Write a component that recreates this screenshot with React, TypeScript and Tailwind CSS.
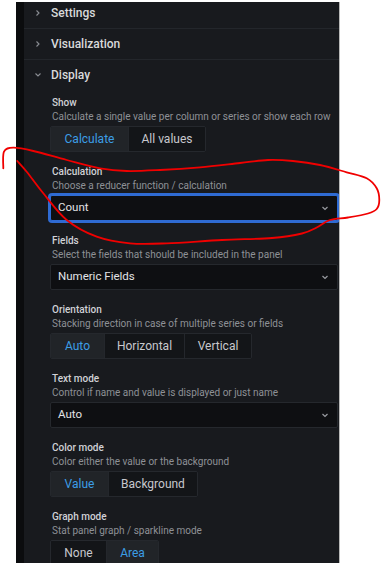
import React from "react";

type Btn = { label: string; w: number; active?: boolean };

const FONT = { fontFamily: "Roboto, 'Noto Sans', sans-serif" };

// freehand red loop, image coordinates
const LOOP: number[][] = [
  [3.3, 168.3], [4, 151.7], [13.3, 147.7], [33.3, 151], [66.7, 160], [100, 168.3],
  [126.7, 171], [160, 170], [200, 167.3], [240, 163], [268, 160], [293, 161],
  [320, 165], [346.7, 172.3], [366.7, 178.3], [376.7, 188.3], [379.3, 200],
  [376.7, 209], [368, 213.5], [348, 217.5], [330, 220], [316.7, 227.5],
  [302, 233.5], [272, 238], [222, 240], [166.7, 243.3], [130, 243.3],
  [96.7, 236.7], [66.7, 220], [43.3, 193.3], [26.7, 171.7], [17.3, 161],
];

function smooth(pts: number[][]) {
  let d = `M${pts[0][0]},${pts[0][1]}`;
  for (let i = 0; i < pts.length - 1; i++) {
    const p0 = pts[i - 1] || pts[i];
    const p1 = pts[i];
    const p2 = pts[i + 1];
    const p3 = pts[i + 2] || p2;
    const c1 = [p1[0] + (p2[0] - p0[0]) / 6, p1[1] + (p2[1] - p0[1]) / 6];
    const c2 = [p2[0] - (p3[0] - p1[0]) / 6, p2[1] - (p3[1] - p1[1]) / 6];
    d += ` C${c1[0]},${c1[1]} ${c2[0]},${c2[1]} ${p2[0]},${p2[1]}`;
  }
  return d;
}

function Header({ title, open, first, last }: { title: string; open?: boolean; first?: boolean; last?: boolean }) {
  return (
    <div
      className={`flex items-center pl-[10px] ${first ? "h-[27px] pb-[4px]" : last ? "h-[30px]" : "h-[31px]"} ${
        last ? "" : "border-b border-[#23262b]"
      }`}
    >
      <svg width="8" height="8" viewBox="0 0 8 8" className="shrink-0">
        {open ? (
          <path d="M1.5 2.5 L4 5 L6.5 2.5" fill="none" stroke="#8a8d93" strokeWidth="1.1" />
        ) : (
          <path d="M2.5 1.5 L5 4 L2.5 6.5" fill="none" stroke="#8a8d93" strokeWidth="1.1" />
        )}
      </svg>
      <span className="ml-[9px] text-[12px] font-medium text-[#d8d9da] leading-none">{title}</span>
    </div>
  );
}

function Field({ label, desc, children }: { label: string; desc: string; children: React.ReactNode }) {
  return (
    <div className="flex flex-col">
      <div className="pl-[2px] h-[14px] leading-[14px] text-[10px] font-medium text-[#d0d1d6]">{label}</div>
      <div className="pl-[2px] h-[13px] leading-[13px] text-[10px] text-[#8e9196] whitespace-nowrap">{desc}</div>
      <div className="mt-[3px]">{children}</div>
    </div>
  );
}

function Group({ items }: { items: Btn[] }) {
  return (
    <div className="inline-flex h-[26px] rounded-[2px] border border-[#25282d] overflow-hidden">
      {items.map((b, i) => (
        <div
          key={b.label}
          style={{ width: b.w }}
          className={`flex items-center justify-center text-[12px] ${i > 0 ? "border-l border-[#24272c]" : ""} ${
            b.active ? "bg-[#212428] text-[#3c9ee6]" : "bg-[#131518] text-[#c7c8cd]"
          }`}
        >
          {b.label}
        </div>
      ))}
    </div>
  );
}

function Select({ value, focused }: { value: string; focused?: boolean }) {
  return (
    <div
      className={`flex items-center h-[26px] pl-[7px] pr-[8px] rounded-[2px] bg-[#0e0f12] border ${
        focused ? "border-[#2f6bd3] ring-2 ring-[#2f6bd3]" : "border-[#25282d]"
      }`}
    >
      <span className="flex-1 text-[11.5px] text-[#e2e3e6]">{value}</span>
      <svg width="8" height="8" viewBox="0 0 8 8">
        <path d="M1.5 3 L4 5.5 L6.5 3" fill="none" stroke="#9a9ca2" strokeWidth="1.2" />
      </svg>
    </div>
  );
}

export default function App() {
  return (
    <div className="relative w-[382px] h-[563px] bg-white overflow-hidden" style={FONT}>
      <div className="pl-[16px] pt-[2px]">
        <div className="flex w-[324px] h-[561px]">
          <div className="w-[8px] bg-[#0b0c0e]" />
          <div className="flex-1 bg-[#181a1e] border-r border-[#b9b9b9] overflow-hidden">
            <Header title="Settings" first />
            <Header title="Visualization" />
            <Header title="Display" open last />

            <div className="pl-[26px] pr-[1px] pt-[6px] flex flex-col gap-[13px]">
              <Field label="Show" desc="Calculate a single value per column or series or show each row">
                <Group
                  items={[
                    { label: "Calculate", w: 77, active: true },
                    { label: "All values", w: 77 },
                  ]}
                />
              </Field>
              <Field label="Calculation" desc="Choose a reducer function / calculation">
                <Select value="Count" focused />
              </Field>
              <Field label="Fields" desc="Select the fields that should be included in the panel">
                <Select value="Numeric Fields" />
              </Field>
              <Field label="Orientation" desc="Stacking direction in case of multiple series or fields">
                <Group
                  items={[
                    { label: "Auto", w: 53, active: true },
                    { label: "Horizontal", w: 80 },
                    { label: "Vertical", w: 67 },
                  ]}
                />
              </Field>
              <Field label="Text mode" desc="Control if name and value is displayed or just name">
                <Select value="Auto" />
              </Field>
              <Field label="Color mode" desc="Color either the value or the background">
                <Group
                  items={[
                    { label: "Value", w: 57, active: true },
                    { label: "Background", w: 89 },
                  ]}
                />
              </Field>
              <Field label="Graph mode" desc="Stat panel graph / sparkline mode">
                <Group
                  items={[
                    { label: "None", w: 55 },
                    { label: "Area", w: 52, active: true },
                  ]}
                />
              </Field>
            </div>
          </div>
        </div>
      </div>

      <svg className="absolute inset-0 pointer-events-none" width="382" height="563" viewBox="0 0 382 563">
        <path d={smooth(LOOP)} fill="none" stroke="#f00000" strokeWidth="1.8" strokeLinecap="round" strokeLinejoin="round" />
      </svg>
    </div>
  );
}
